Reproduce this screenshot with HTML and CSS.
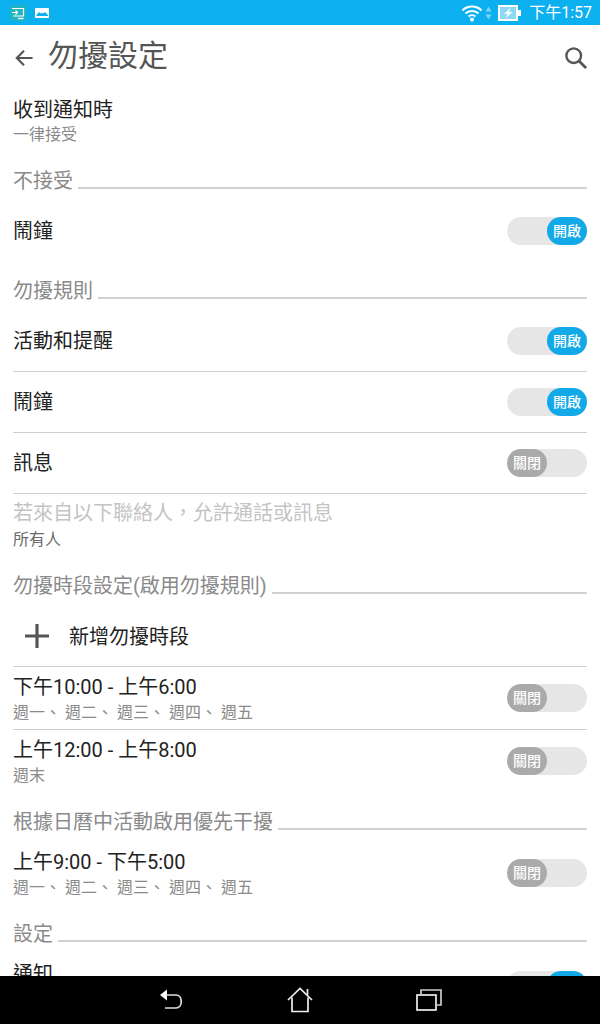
FILE: index.html
```html
<!DOCTYPE html>
<html lang="zh-Hant">
<head>
    <title>勿擾設定</title>
    <link rel="stylesheet" href="styles.css">
</head>
<body>

<div class="status-bar">
    <svg class="status-icon" width="16" height="16" viewBox="0 0 16 16">
        <rect x="0" y="0" width="16" height="16" rx="2" fill="#1fb4c2"/>
        <path d="M2 3.500h11.500v7.500H3" fill="none" stroke="#fff" stroke-width="1.200"/>
        <path d="M2 7.500h5M5.500 5.500l2 2-2 2" fill="none" stroke="#fff" stroke-width="1.200"/>
        <path d="M8 13.500h5.500" stroke="#fff" stroke-width="1.400"/>
    </svg>
    <svg class="status-icon" width="14" height="10" viewBox="0 0 14 10">
        <rect x="0" y="0" width="14" height="10" rx="1" fill="#fff"/>
        <path d="M1.500 7l2.500-3 2 1.500 1-1 1 1 2-1.500 3 3V8H1.500z" fill="#0cb0ef"/>
    </svg>
    <div class="status-right">
        <svg width="22" height="18" viewBox="0 0 22 18">
            <path d="M1.500 6.500C6.500 1.300 15.500 1.300 20.500 6.500M4.500 9.500C8 6 14 6 17.500 9.500M7.500 12.500C9.500 10.700 12.500 10.700 14.500 12.500" fill="none" stroke="#fff" stroke-width="2"/>
            <circle cx="11" cy="15.500" r="2" fill="#fff"/>
        </svg>
        <svg class="status-arrows" width="7" height="14" viewBox="0 0 7 14">
            <path d="M3.500 .5L6.500 5.500H.5z" fill="#7fd3f4"/>
            <path d="M3.500 13.500L6.500 8.500H.5z" fill="#7fd3f4"/>
        </svg>
        <svg class="status-battery" width="23" height="16" viewBox="0 0 23 16">
            <rect x="1" y="1" width="18" height="14" fill="#8ed8f6" stroke="#fff" stroke-width="2"/>
            <rect x="20" y="5" width="3" height="6" fill="#fff"/>
            <path d="M12.500 3L6 9h3.500L8 13l6.500-6H11z" fill="#fff"/>
        </svg>
        <span class="status-time">下午1:57</span>
    </div>
</div>

<div class="app-header">
    <svg class="back-arrow" width="18" height="18" viewBox="0 0 20 20">
        <path d="M19.500 10H2M10 2l-8 8 8 8" fill="none" stroke="#555" stroke-width="2.400"/>
    </svg>
    <h1 class="page-title">勿擾設定</h1>
    <svg class="search-icon" width="22" height="22" viewBox="0 0 24 24">
        <circle cx="9.500" cy="9.500" r="8" fill="none" stroke="#555" stroke-width="2.600"/>
        <path d="M15 15l8 8" stroke="#555" stroke-width="3"/>
    </svg>
</div>

<div class="content">
    <div class="item-text top-item">
        <div class="item-title">收到通知時</div>
        <div class="item-sub">一律接受</div>
    </div>

    <div class="section first-section"><span>不接受</span><i></i></div>
    <div class="row">
        <div class="item-title">鬧鐘</div>
        <div class="toggle on"><span>開啟</span></div>
    </div>

    <div class="section"><span>勿擾規則</span><i></i></div>
    <div class="row border">
        <div class="item-title">活動和提醒</div>
        <div class="toggle on"><span>開啟</span></div>
    </div>
    <div class="row border">
        <div class="item-title">鬧鐘</div>
        <div class="toggle on"><span>開啟</span></div>
    </div>
    <div class="row border">
        <div class="item-title">訊息</div>
        <div class="toggle"><span>關閉</span></div>
    </div>
    <div class="item-text contact-item">
        <div class="item-title disabled">若來自以下聯絡人，允許通話或訊息</div>
        <div class="item-sub dark">所有人</div>
    </div>

    <div class="section"><span>勿擾時段設定(啟用勿擾規則)</span><i></i></div>
    <div class="row border add-row">
        <svg class="plus-icon" width="26" height="26" viewBox="0 0 26 26">
            <path d="M13 1v24M1 13h24" stroke="#555" stroke-width="3.200"/>
        </svg>
        <div class="item-title">新增勿擾時段</div>
    </div>
    <div class="row two-line border">
        <div class="item-text">
            <div class="item-title">下午10:00 - 上午6:00</div>
            <div class="item-sub">週一、 週二、 週三、 週四、 週五</div>
        </div>
        <div class="toggle"><span>關閉</span></div>
    </div>
    <div class="row two-line">
        <div class="item-text">
            <div class="item-title">上午12:00 - 上午8:00</div>
            <div class="item-sub">週末</div>
        </div>
        <div class="toggle"><span>關閉</span></div>
    </div>

    <div class="section"><span>根據日曆中活動啟用優先干擾</span><i></i></div>
    <div class="row two-line">
        <div class="item-text">
            <div class="item-title">上午9:00 - 下午5:00</div>
            <div class="item-sub">週一、 週二、 週三、 週四、 週五</div>
        </div>
        <div class="toggle"><span>關閉</span></div>
    </div>

    <div class="section"><span>設定</span><i></i></div>
    <div class="row two-line">
        <div class="item-text">
            <div class="item-title">通知</div>
        </div>
        <div class="toggle on"><span>開啟</span></div>
    </div>
</div>

<div class="nav-bar">
    <svg width="26" height="24" viewBox="0 0 26 24">
        <path d="M2 7L9 1.500V12.500z" fill="#fff"/>
        <path d="M8 7h10c7 0 7 13 0 13H7" fill="none" stroke="#ddd" stroke-width="1.700"/>
    </svg>
    <svg width="26" height="26" viewBox="0 0 26 26">
        <path d="M1 13L13 1.500 25 13" fill="none" stroke="#eee" stroke-width="1.700"/>
        <path d="M5 10.500V24.500H21V10.500M20.500 2V8" fill="none" stroke="#eee" stroke-width="1.700"/>
    </svg>
    <svg width="26" height="22" viewBox="0 0 26 22">
        <rect x="1" y="6" width="19" height="15" fill="none" stroke="#eee" stroke-width="1.700"/>
        <path d="M5 5.500V1H25V16H21" fill="none" stroke="#ccc" stroke-width="1.700"/>
    </svg>
</div>

</body>
</html>
```

FILE: styles.css
```css
html, body {
    margin: 0;
    height: 100%;
}
body {
    width: 600px;
    height: 1024px;
    display: flex;
    flex-direction: column;
    overflow: hidden;
    background-color: white;
    font-family: Roboto, "Noto Sans CJK TC", sans-serif;
}

.status-bar {
    height: 25px;
    flex: none;
    display: flex;
    align-items: center;
    padding: 0 8px 0 10px;
    gap: 9px;
    background-color: #0cb0ef;
}
.status-right {
    margin-left: auto;
    display: flex;
    align-items: center;
}
.status-arrows {
    margin-left: 2px;
}
.status-battery {
    margin-left: 6px;
}
.status-time {
    margin-left: 8px;
    color: white;
    font-size: 16px;
    line-height: 20px;
}

.app-header {
    height: 65px;
    flex: none;
    display: flex;
    align-items: center;
    padding: 0 13px 0 15px;
    box-sizing: border-box;
}
.back-arrow {
    margin-right: 15px;
}
.page-title {
    margin: 0 0 4px;
    color: #555;
    font-size: 30px;
    font-weight: 400;
    line-height: 40px;
}
.search-icon {
    margin-left: auto;
}

.content {
    flex: 1;
    min-height: 0;
    overflow: hidden;
    padding: 0 13px;
}

.item-text {
    min-width: 0;
}
.top-item {
    padding-top: 10px;
}
.top-item .item-sub {
    margin-top: 5px;
}
.contact-item {
    padding: 9px 0 6px;
}
.contact-item .item-sub {
    margin-top: 7px;
}
.item-title {
    color: #222;
    font-size: 20px;
    line-height: 20px;
}
.item-title.disabled {
    color: #c4c4c4;
}
.item-sub {
    margin-top: 6px;
    color: #8a8a8a;
    font-size: 16px;
    line-height: 20px;
}
.item-sub.dark {
    color: #6a6a6a;
}

.section {
    height: 20px;
    margin-top: 19px;
    margin-bottom: 11px;
    display: flex;
    align-items: flex-end;
    gap: 5px;
    color: #8a8a8a;
    font-size: 20px;
    line-height: 20px;
}
.section span {
    margin-bottom: -1px;
}
.section i {
    flex: 1;
    height: 2px;
    margin-bottom: 1px;
    background-color: #d2d2d2;
}
.first-section {
    margin-top: 25px;
}

.row {
    height: 60px;
    display: flex;
    align-items: center;
    justify-content: space-between;
}
.row.border {
    height: 61px;
    box-sizing: border-box;
    border-bottom: 1px solid #cfcfcf;
}
.row.two-line {
    height: 52px;
    align-items: flex-start;
    padding-top: 10px;
    box-sizing: content-box;
}
.row.two-line .toggle {
    margin-top: 7px;
}

.add-row {
    justify-content: flex-start;
}
.add-row .item-title {
    margin-top: 1px;
}
.plus-icon {
    margin: 0 19px 0 11px;
}

.toggle {
    width: 80px;
    height: 28px;
    flex: none;
    border-radius: 14px;
    background-color: #e6e6e6;
    display: flex;
}
.toggle span {
    width: 40px;
    height: 28px;
    border-radius: 14px;
    background-color: #aaa;
    color: white;
    font-size: 14px;
    font-weight: 500;
    line-height: 28px;
    text-align: center;
}
.toggle.on {
    justify-content: flex-end;
}
.toggle.on span {
    background-color: #12a9e9;
}

.nav-bar {
    height: 48px;
    flex: none;
    display: flex;
    align-items: center;
    justify-content: center;
    gap: 103px;
    background-color: black;
}
```
